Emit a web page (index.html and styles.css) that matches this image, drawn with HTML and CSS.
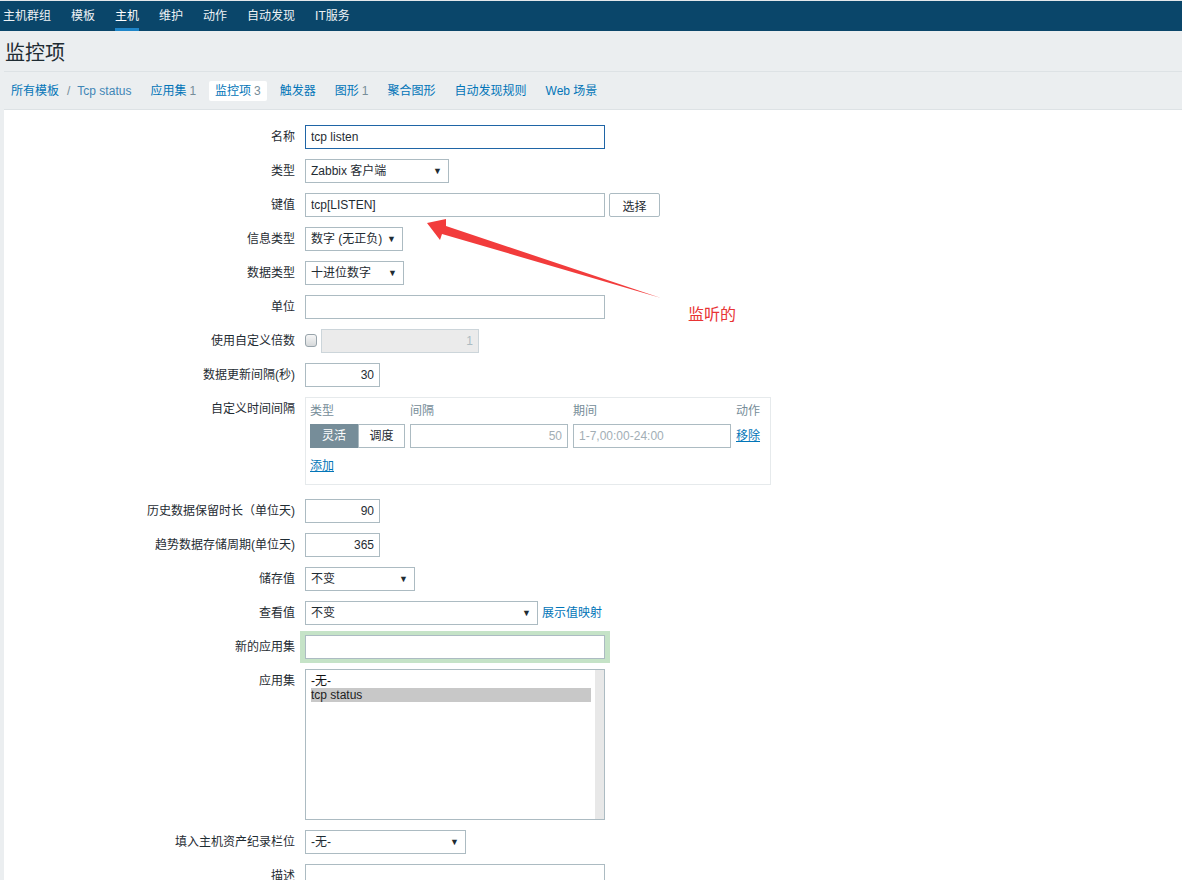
FILE: index.html
```html
<!DOCTYPE html>
<html lang="zh-CN">
<head>
<meta charset="utf-8">
<title>监控项</title>
<link rel="stylesheet" href="styles.css">
</head>
<body>
<nav class="topnav">
  <a href="#">主机群组</a>
  <a href="#">模板</a>
  <a href="#" class="active">主机</a>
  <a href="#">维护</a>
  <a href="#">动作</a>
  <a href="#">自动发现</a>
  <a href="#">IT服务</a>
</nav>
<div class="wrap">
  <header class="page-head"><h1>监控项</h1></header>
  <div class="tabs">
    <span class="tab crumb"><a href="#">所有模板</a><span class="slash">/</span><a href="#" class="crumb-cur">Tcp status</a></span>
    <a class="tab" href="#">应用集<span class="count">1</span></a>
    <a class="tab active" href="#">监控项<span class="count">3</span></a>
    <a class="tab" href="#">触发器</a>
    <a class="tab" href="#">图形<span class="count">1</span></a>
    <a class="tab" href="#">聚合图形</a>
    <a class="tab" href="#">自动发现规则</a>
    <a class="tab" href="#">Web 场景</a>
  </div>
  <main class="panel">
    <div class="row"><label class="lbl">名称</label><input class="inp w300 focus" value="tcp listen"></div>
    <div class="row"><label class="lbl">类型</label><div class="inp sel w144"><span>Zabbix 客户端</span><span class="arr">▼</span></div></div>
    <div class="row"><label class="lbl">键值</label><input class="inp w300" value="tcp[LISTEN]"><button class="btn">选择</button></div>
    <div class="row"><label class="lbl">信息类型</label><div class="inp sel w98"><span>数字 (无正负)</span><span class="arr">▼</span></div></div>
    <div class="row"><label class="lbl">数据类型</label><div class="inp sel w99"><span>十进位数字</span><span class="arr">▼</span></div></div>
    <div class="row"><label class="lbl">单位</label><input class="inp w300" value=""></div>
    <div class="row"><label class="lbl">使用自定义倍数</label><span class="chk"></span><input class="inp num w158 disabled" value="1" disabled></div>
    <div class="row"><label class="lbl">数据更新间隔(秒)</label><input class="inp num w75" value="30"></div>
    <div class="row row-box"><label class="lbl">自定义时间间隔</label>
      <div class="intervals">
        <div class="igrid ihead"><span>类型</span><span>间隔</span><span>期间</span><span>动作</span></div>
        <div class="igrid irow">
          <div class="seg"><span class="on">灵活</span><span class="off">调度</span></div>
          <input class="inp num" placeholder="50">
          <input class="inp" placeholder="1-7,00:00-24:00">
          <a href="#" class="ulink">移除</a>
        </div>
        <a href="#" class="ulink add">添加</a>
      </div>
    </div>
    <div class="row"><label class="lbl">历史数据保留时长（单位天)</label><input class="inp num w75" value="90"></div>
    <div class="row"><label class="lbl">趋势数据存储周期(单位天)</label><input class="inp num w75" value="365"></div>
    <div class="row"><label class="lbl">储存值</label><div class="inp sel w110"><span>不变</span><span class="arr">▼</span></div></div>
    <div class="row"><label class="lbl">查看值</label><div class="inp sel w233"><span>不变</span><span class="arr">▼</span></div><a href="#" class="link">展示值映射</a></div>
    <div class="row"><label class="lbl">新的应用集</label><input class="inp w300 glow" value=""></div>
    <div class="row"><label class="lbl">应用集</label>
      <div class="listbox">
        <div class="opts"><div class="opt">-无-</div><div class="opt selected">tcp status</div></div>
        <div class="track"></div>
      </div>
    </div>
    <div class="row"><label class="lbl">填入主机资产纪录栏位</label><div class="inp sel w161"><span>-无-</span><span class="arr">▼</span></div></div>
    <div class="row"><label class="lbl">描述</label><textarea class="inp w300 desc"></textarea></div>
  </main>
</div>
<svg class="annot-arrow" width="1182" height="880" viewBox="0 0 1182 880" aria-hidden="true">
  <polygon points="427,223 446,219 446,226 661,298 442,234 440,240" fill="#f23c3c"/>
</svg>
<div class="annot-text">监听的</div>
</body>
</html>
```
FILE: styles.css
```css
* { box-sizing: border-box; }
html, body { margin: 0; padding: 0; }
body {
  background: #ebeef0;
  font-family: "Liberation Sans", "Noto Sans CJK SC", sans-serif;
  font-size: 12px;
  color: #1f2c33;
  position: relative;
  height: 880px;
  overflow: hidden;
}
a { text-decoration: none; }

.topnav {
  border-top: 1px solid #e4e8eb;
  background: #0a466a;
  height: 31px;
  display: flex;
  padding-left: 3px;
}
.topnav a {
  color: #eef2f5;
  line-height: 30px;
  height: 30px;
  margin-right: 20px;
  font-size: 12px;
}
.topnav a.active { color: #fff; box-shadow: inset 0 -3px 0 #1f86c9; }

.wrap { padding-left: 4px; }
.page-head {
  height: 41px;
  border-bottom: 1px solid #dde2e5;
  padding: 4px 0 0 1px;
}
.page-head h1 {
  margin: 0;
  font-size: 20px;
  font-weight: normal;
  line-height: 36px;
  color: #1f2c33;
}

.tabs {
  height: 38px;
  border-bottom: 1px solid #dde2e5;
  display: flex;
  align-items: center;
  padding-left: 1px;
}
.tab {
  padding: 0 6px;
  line-height: 20px;
  margin-right: 7px;
  color: #0275b8;
  border-radius: 2px;
}
.tab a { color: #0275b8; }
.tab .crumb-cur { color: #3f86b6; }
.tab .slash { color: #768d99; margin: 0 7px 0 8px; }
.tab .count { color: #768d99; margin-left: 3px; }
.tab.active { background: #fff; }

.panel {
  background: #fff;
  padding: 15px 0 20px;
  min-height: 780px;
}
.row {
  display: flex;
  align-items: flex-start;
  margin-bottom: 10px;
}
.row-box { margin-bottom: 14px; }
.lbl {
  width: 291px;
  flex: none;
  text-align: right;
  line-height: 24px;
  margin-right: 10px;
  color: #1f2c33;
}

.inp {
  height: 24px;
  border: 1px solid #acbbc2;
  background: #fff;
  padding: 0 5px;
  line-height: 22px;
  font-family: inherit;
  font-size: 12px;
  color: #1f2c33;
  white-space: nowrap;
  outline: none;
  margin: 0;
  border-radius: 0;
}
.inp::placeholder { color: #a2aeb5; opacity: 1; }
.num { text-align: right; }
.focus { border-color: #1f65a6; }
.disabled { background: #ebebeb; border-color: #ccd5da; color: #acbbc2; margin-left: 4px; }
.w300 { width: 300px; }
.w144 { width: 144px; }
.w98 { width: 98px; }
.w99 { width: 99px; }
.w158 { width: 158px; }
.w75 { width: 75px; }
.w110 { width: 110px; }
.w233 { width: 233px; }
.w161 { width: 161px; }

.sel {
  display: flex;
  justify-content: space-between;
  align-items: center;
  padding: 0 6px 0 5px;
}
.sel .arr { font-size: 9px; color: #1f2c33; }

.btn {
  width: 51px;
  height: 24px;
  margin-left: 4px;
  border: 1px solid #acbbc2;
  border-radius: 2px;
  background: #fff;
  font-family: inherit;
  font-size: 12px;
  color: #1f2c33;
  padding: 0;
}

.chk {
  width: 12px;
  height: 13px;
  margin-top: 5px;
  border: 1px solid #98a4ab;
  border-radius: 3px;
  background: linear-gradient(#f6f6f6, #d6d9db);
  flex: none;
}

.link { color: #0275b8; line-height: 24px; margin-left: 4px; }
.ulink { color: #0275b8; text-decoration: underline; line-height: 24px; }

.intervals {
  width: 466px;
  height: 88px;
  border: 1px solid #e6eaec;
  padding: 4px;
}
.igrid {
  display: grid;
  grid-template-columns: 95px 158px 158px auto;
  column-gap: 5px;
}
.ihead { line-height: 18px; color: #768d99; margin-bottom: 4px; }
.irow .inp { width: 158px; }
.seg { display: flex; }
.seg span {
  height: 24px;
  line-height: 22px;
  text-align: center;
  border: 1px solid #acbbc2;
}
.seg .on { width: 48px; background: #768d99; border-color: #768d99; color: #fff; }
.seg .off { width: 47px; background: #fff; color: #1f2c33; }
.add { display: inline-block; margin-top: 9px; line-height: 18px; }

.glow {
  box-shadow: 0 0 0 4px #c5e3c7, 1px 0 0 4px #c5e3c7, -1px 0 0 4px #c5e3c7;
}

.listbox {
  width: 300px;
  height: 151px;
  border: 1px solid #acbbc2;
  display: flex;
}
.opts { flex: 1; padding: 4px 4px 0 5px; }
.opt { line-height: 14px; color: #111; }
.opt.selected { background: #c8c8c8; color: #222; }
.track { width: 9px; background: #e8e8e8; }

.desc { height: 60px; resize: none; }

.annot-arrow {
  position: absolute;
  left: 0;
  top: 0;
  pointer-events: none;
}
.annot-text {
  position: absolute;
  left: 688px;
  top: 303px;
  font-family: "Noto Sans CJK SC", sans-serif;
  font-size: 16px;
  line-height: 20px;
  color: #e83434;
}
```
